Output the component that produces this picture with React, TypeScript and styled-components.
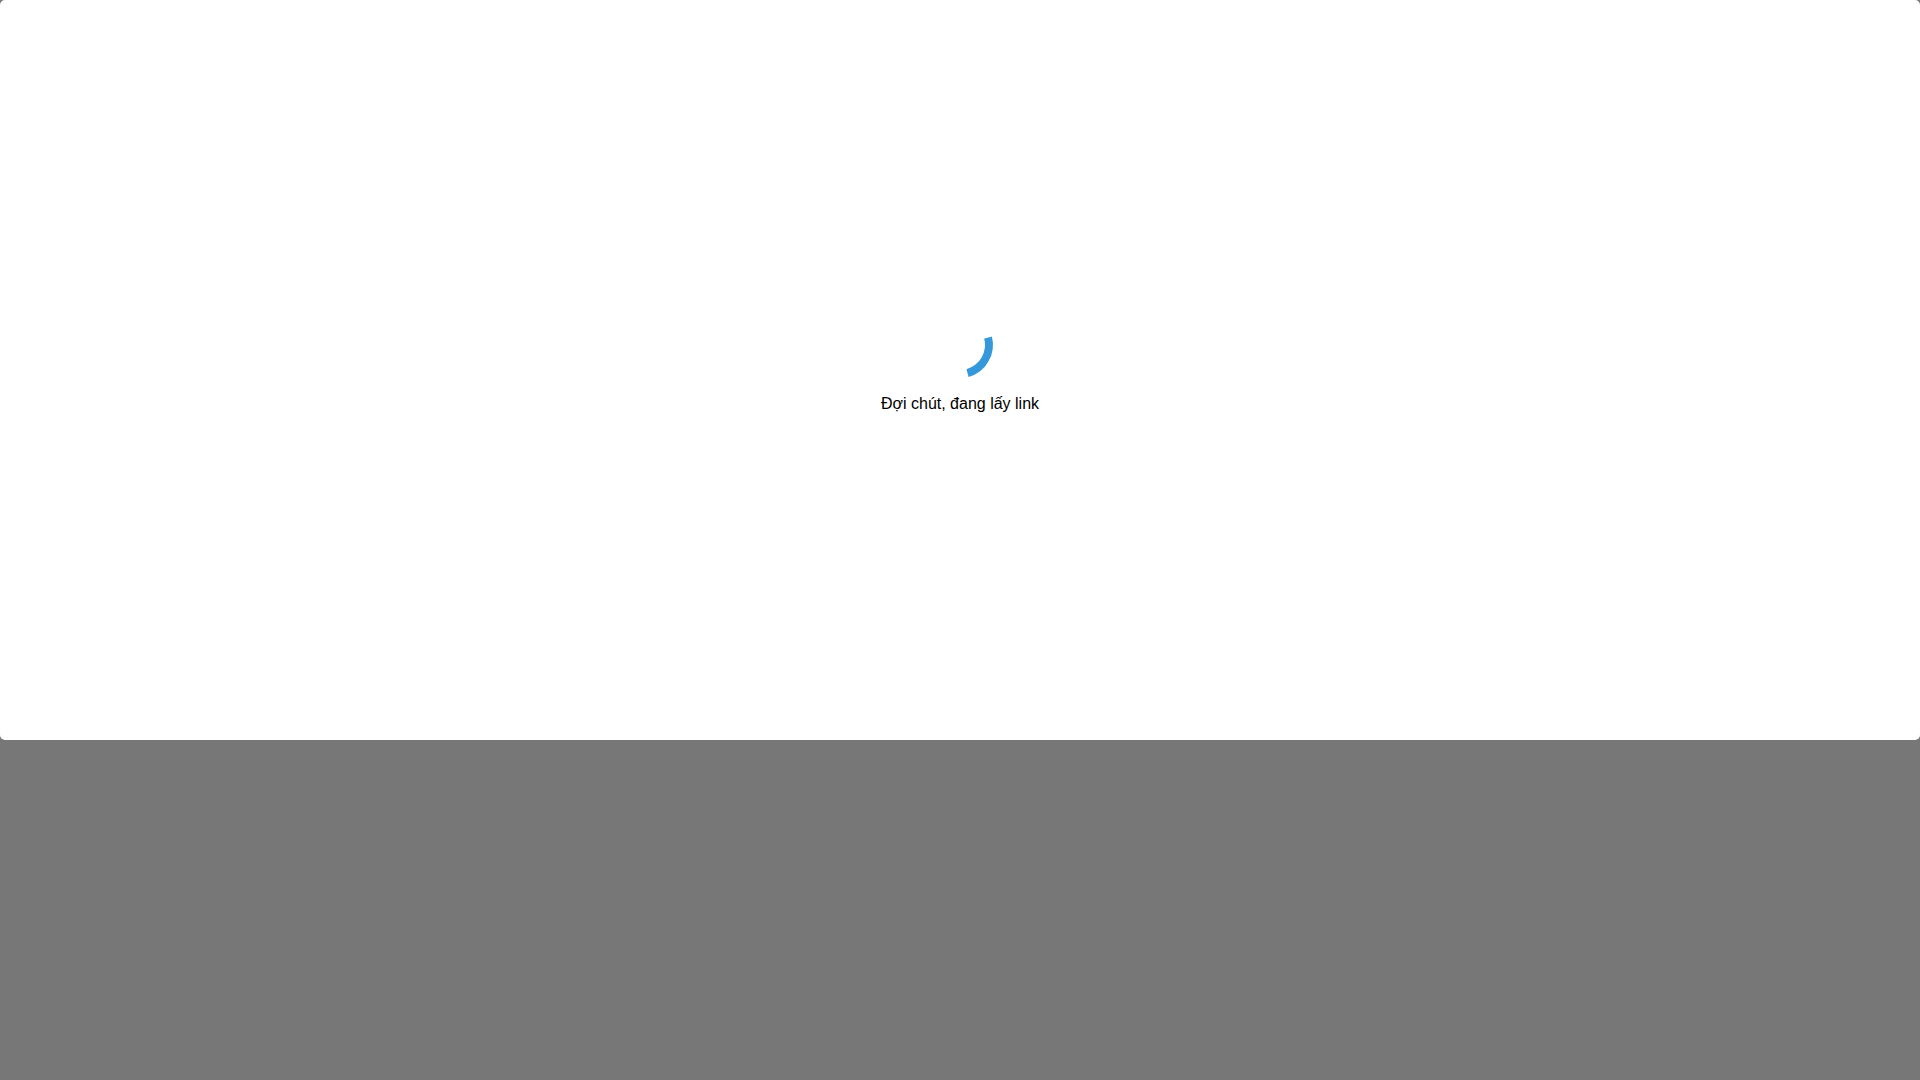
import React from "react";
import styled, { createGlobalStyle } from "styled-components";

const GlobalStyle = createGlobalStyle`
  body {
    margin: 0;
    background: #777777;
    color: #000000;
    font-family: Arial, "Liberation Sans", sans-serif;
    font-size: 16px;
  }
`;

const Backdrop = styled.main`
  min-height: 100vh;
  background: #777777;
`;

const Panel = styled.section`
  display: flex;
  flex-direction: column;
  align-items: center;
  justify-content: center;
  min-height: 740px;
  border-radius: 5px;
  background: #ffffff;
`;

const Spinner = styled.div<{ $angle: number }>`
  width: 50px;
  height: 50px;
  border: 8px solid transparent;
  border-top-color: #3498db;
  border-radius: 50%;
  transform: rotate(${({ $angle }) => $angle}deg);
`;

const Message = styled.p`
  margin: 17px 0 16px;
  text-align: center;
`;

export default function App() {
  return (
    <>
      <GlobalStyle />
      <Backdrop>
        <Panel role="status">
          <Spinner $angle={120} aria-hidden="true" />
          <Message>Đợi chút, đang lấy link</Message>
        </Panel>
      </Backdrop>
    </>
  );
}
